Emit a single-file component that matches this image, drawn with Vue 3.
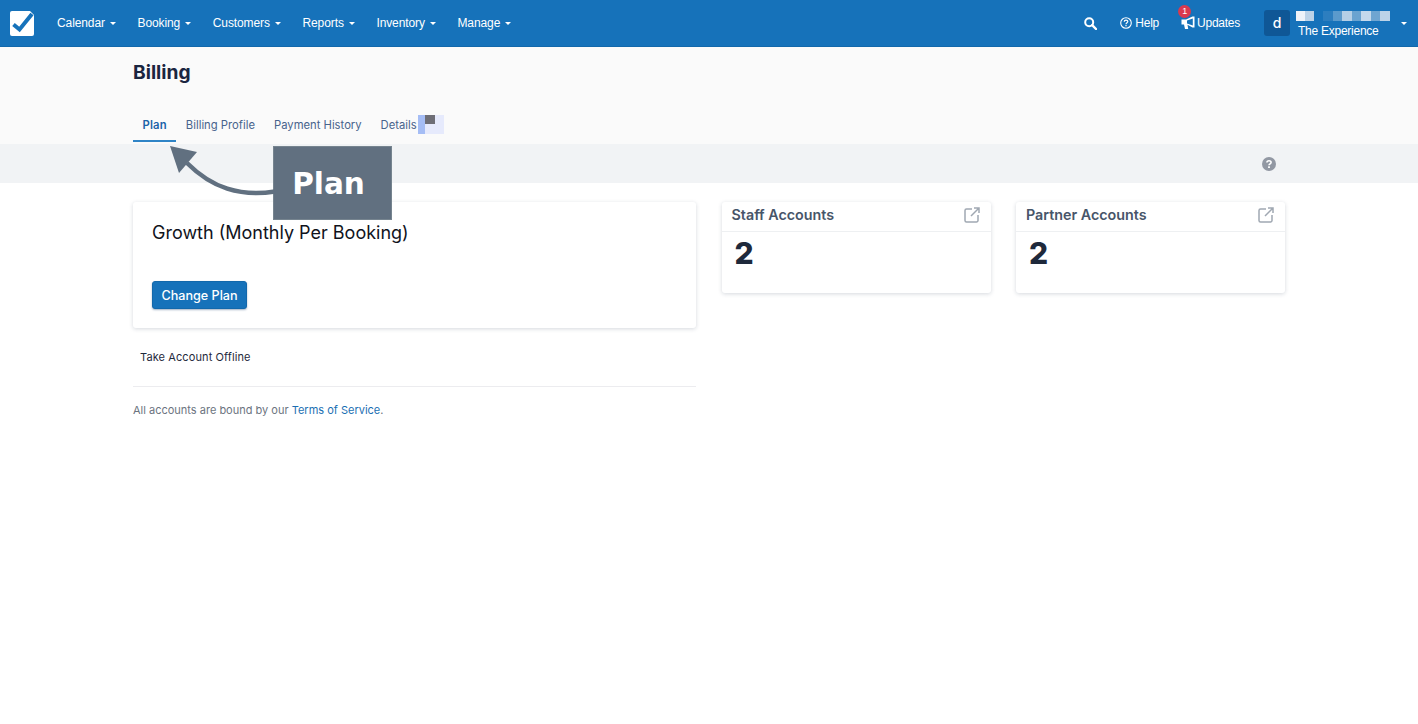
<script setup>
const navItems = ['Calendar', 'Booking', 'Customers', 'Reports', 'Inventory', 'Manage']
const tabs = ['Plan', 'Billing Profile', 'Payment History', 'Details']
const nameBlocks = [
  { w: 9, c: '#eef3f9' }, { w: 9, c: '#bcd3e8' }, { w: 9, c: '#1672ba' },
  { w: 10, c: '#2d7ebf' }, { w: 9, c: '#5b9acc' }, { w: 10, c: '#b5cfe6' }, { w: 9, c: '#6aa3d0' },
  { w: 10, c: '#c5d9ec' }, { w: 9, c: '#6fa5d1' }, { w: 10, c: '#bcd3e8' }
]
const stats = ['Staff Accounts', 'Partner Accounts']
</script>

<template>
  <div class="page">
    <header class="topbar">
      <div class="logo">
        <svg width="24" height="25" viewBox="0 0 24 25">
          <rect width="24" height="25" rx="2" fill="#fff" />
          <path d="M3.5 13.5 L9.5 18.5 L22 3" fill="none" stroke="#1672ba" stroke-width="4" />
          <path d="M20 0 H24 V4 Z" fill="#1672ba" />
        </svg>
      </div>
      <nav class="nav">
        <a v-for="item in navItems" :key="item" class="nav-item">{{ item }}<i class="caret"></i></a>
      </nav>
      <div class="top-right">
        <svg class="search" width="13" height="13" viewBox="0 0 13 13">
          <circle cx="5.2" cy="5.2" r="4" fill="none" stroke="#fff" stroke-width="2" />
          <path d="M8.2 8.2 L12 12" stroke="#fff" stroke-width="2.4" stroke-linecap="round" />
        </svg>
        <a class="help">
          <svg width="12" height="12" viewBox="0 0 12 12">
            <circle cx="6" cy="6" r="5.3" fill="none" stroke="#fff" stroke-width="1.1" />
            <path d="M4.2 4.7 C4.3 2.6 7.8 2.6 7.8 4.6 C7.8 5.8 6 5.9 6 7.3" fill="none" stroke="#fff" stroke-width="1.2" />
            <rect x="5.4" y="8" width="1.2" height="1.3" fill="#fff" />
          </svg>
          Help
        </a>
        <a class="updates">
          <span class="badge">1</span>
          <svg width="15" height="14" viewBox="0 0 15 14">
            <path fill-rule="evenodd" d="M0.5 3.5 H5 L11.5 0.5 H13.5 V11.5 H11.5 L6.5 8.8 L7.2 13 H4 L3 8.5 H0.5 Z M6 4.5 V7.6 L11.8 9.5 V2.4 Z" fill="#fff" />
          </svg>
          Updates
        </a>
        <div class="account">
          <span class="avatar">d</span>
          <div class="account-text">
            <div class="mosaic">
              <span v-for="(b, i) in nameBlocks" :key="i" :style="{ width: b.w + 'px', background: b.c }"></span>
            </div>
            <div class="exp">The Experience</div>
          </div>
          <i class="caret account-caret"></i>
        </div>
      </div>
    </header>

    <section class="subhead">
      <div class="wrap">
        <h1>Billing</h1>
        <div class="tabs">
          <a v-for="(t, i) in tabs" :key="t" class="tab" :class="{ active: i === 0 }">{{ t }}</a>
          <span class="tab-blur"><i></i></span>
        </div>
      </div>
    </section>

    <section class="strip">
      <div class="wrap strip-in">
        <svg width="14" height="14" viewBox="0 0 14 14">
          <circle cx="7" cy="7" r="7" fill="#9298a3" />
          <path d="M4.9 5.5 C5 3.2 9.1 3.2 9.1 5.4 C9.1 6.8 7 6.8 7 8.2" fill="none" stroke="#fff" stroke-width="1.6" />
          <rect x="6.1" y="9.3" width="1.8" height="1.7" fill="#fff" />
        </svg>
      </div>
    </section>

    <main class="wrap content">
      <div class="left">
        <div class="card plan-card">
          <h2>Growth (Monthly Per Booking)</h2>
          <button class="btn">Change Plan</button>
        </div>
        <div class="offline">Take Account Offline</div>
        <div class="terms">All accounts are bound by our <a>Terms of Service</a>.</div>
      </div>
      <div v-for="s in stats" :key="s" class="card stat">
        <div class="stat-head">
          <span>{{ s }}</span>
          <svg class="ext" width="16" height="16" viewBox="0 0 16 16">
            <path d="M8 2 H2.5 A1.5 1.5 0 0 0 1 3.5 V13.5 A1.5 1.5 0 0 0 2.5 15 H12.5 A1.5 1.5 0 0 0 14 13.5 V8" fill="none" stroke="#a0a8b2" stroke-width="1.5" />
            <path d="M7 9 L15 1 M10 1 H15 V6" fill="none" stroke="#a0a8b2" stroke-width="1.5" />
          </svg>
        </div>
        <div class="stat-value">2</div>
      </div>
    </main>

    <div class="callout">Plan</div>
    <svg class="arrow" width="110" height="60" viewBox="0 0 110 60">
      <path d="M105 45.5 C70 51 42 42 17 17" fill="none" stroke="#617080" stroke-width="4.5" />
      <path d="M0 0 L27 6 L9 27 Z" fill="#617080" />
    </svg>
  </div>
</template>

<style scoped>
.page {
  position: relative;
  min-height: 724px;
  background: #fff;
  font-family: Inter, sans-serif;
  color: #1a2540;
}
.topbar {
  height: 47px;
  box-sizing: border-box;
  background: #1672ba;
  border-bottom: 1px solid #1268ab;
  display: flex;
  align-items: center;
  padding: 0 11px 0 10px;
  font-family: "Liberation Sans", Arial, sans-serif;
  font-size: 12px;
  letter-spacing: -0.25px;
  color: #fff;
}
.logo { display: flex; margin-right: 23px; }
.nav { display: flex; gap: 21.6px; letter-spacing: -0.1px; }
.nav-item { display: flex; align-items: center; }
.caret {
  display: inline-block;
  width: 0;
  height: 0;
  margin-left: 5px;
  margin-top: 1px;
  border-left: 3px solid transparent;
  border-right: 3px solid transparent;
  border-top: 3.5px solid #fff;
}
.top-right { margin-left: auto; display: flex; align-items: center; }
.search { margin-right: 23px; }
.help { display: flex; align-items: center; gap: 3px; margin-right: 22px; }
.updates { position: relative; display: flex; align-items: center; gap: 1px; margin-right: 24px; }
.badge {
  position: absolute;
  left: -3px;
  top: -11px;
  width: 13px;
  height: 13px;
  border-radius: 50%;
  background: #d9394e;
  font-size: 9px;
  line-height: 13px;
  text-align: center;
}
.account { display: flex; align-items: center; }
.avatar {
  width: 26px;
  height: 26px;
  border-radius: 3px;
  background: #0f5796;
  font-family: Inter, sans-serif;
  font-size: 14px;
  font-weight: 500;
  line-height: 26px;
  text-align: center;
  margin-right: 6px;
}
.account-text { width: 105px; padding-top: 3px; }
.mosaic { display: flex; height: 10px; margin-bottom: 3px; }
.exp { padding-left: 2px; line-height: 14px; }
.account-caret { margin-left: 0; }
.wrap { width: 1152px; margin: 0 auto; }
.subhead { height: 97px; box-sizing: border-box; background: #fafafa; }
.subhead .wrap { position: relative; height: 97px; display: flex; flex-direction: column; justify-content: space-between; }
h1 {
  margin: 0;
  padding-top: 14px;
  font-size: 19.2px;
  line-height: 22px;
  font-weight: 700;
  color: #1a2540;
}
.tabs { display: flex; align-items: flex-start; height: 36px; margin-bottom: 2px; font-size: 11.25px; }
.tab {
  height: 36px;
  padding: 4px 9.5px 0;
  line-height: 31px;
  box-sizing: border-box;
  color: #48638c;
}
.tab.active {
  color: #1b62a8;
  font-weight: 600;
  letter-spacing: 0.2px;
  border-bottom: 2px solid #2f84c6;
}
.tab-blur {
  position: relative;
  width: 26px;
  height: 19px;
  margin: 9px 0 0 -8px;
  background: #e6eafc;
  border-left: 7px solid #a5bdf5;
  box-sizing: border-box;
}
.tab-blur i {
  position: absolute;
  left: 0;
  top: 0;
  width: 10px;
  height: 9px;
  background: #6e6e76;
}
.strip { height: 39px; background: #f1f3f5; }
.strip-in { height: 39px; display: flex; align-items: center; justify-content: flex-end; padding-right: 9px; box-sizing: border-box; }
.content { display: flex; align-items: flex-start; gap: 25.5px; padding-top: 19px; }
.left { width: 563px; }
.card {
  background: #fff;
  border-radius: 3px;
  box-shadow: 0 1px 4px rgba(30, 45, 70, 0.18);
}
.plan-card { height: 126px; box-sizing: border-box; padding: 19px; }
h2 {
  margin: 0 0 37px;
  font-size: 18px;
  line-height: 23px;
  font-weight: 400;
  color: #10131c;
}
.btn {
  display: block;
  width: 95px;
  height: 28px;
  padding: 0;
  border: 1px solid #1268ab;
  border-radius: 3px;
  background: #1672ba;
  box-shadow: 0 1px 2px rgba(20, 60, 110, 0.4);
  color: #fff;
  font-family: Inter, sans-serif;
  font-size: 12.6px;
  font-weight: 500;
}
.offline {
  margin-top: 16px;
  padding: 0 7px 16px;
  border-bottom: 1px solid #ececef;
  font-size: 11px;
  line-height: 26px;
  letter-spacing: 0.1px;
  color: #1f2a3c;
}
.terms {
  margin-top: 15px;
  font-size: 11px;
  line-height: 16px;
  color: #6c7480;
}
.terms a { color: #1b6fb3; }
.stat { width: 269px; height: 91px; }
.stat-head {
  display: flex;
  align-items: center;
  justify-content: space-between;
  padding: 0 11px 4px 10px;
  height: 25px;
  border-bottom: 1px solid #eef0f2;
  font-size: 14.3px;
  font-weight: 600;
  color: #475569;
}
.ext { margin-top: 1px; }
.stat-value {
  padding: 3px 13px;
  font-size: 30px;
  line-height: 36px;
  font-weight: 800;
  color: #1e293b;
}
.callout {
  position: absolute;
  left: 273px;
  top: 146px;
  width: 119px;
  height: 74px;
  box-sizing: border-box;
  padding-right: 8px;
  background: #617080;
  border: 1px solid #76848f;
  color: #fff;
  font-family: "DejaVu Sans", sans-serif;
  font-size: 29.5px;
  font-weight: 700;
  line-height: 74px;
  text-align: center;
}
.arrow {
  position: absolute;
  left: 170px;
  top: 146px;
}
</style>
